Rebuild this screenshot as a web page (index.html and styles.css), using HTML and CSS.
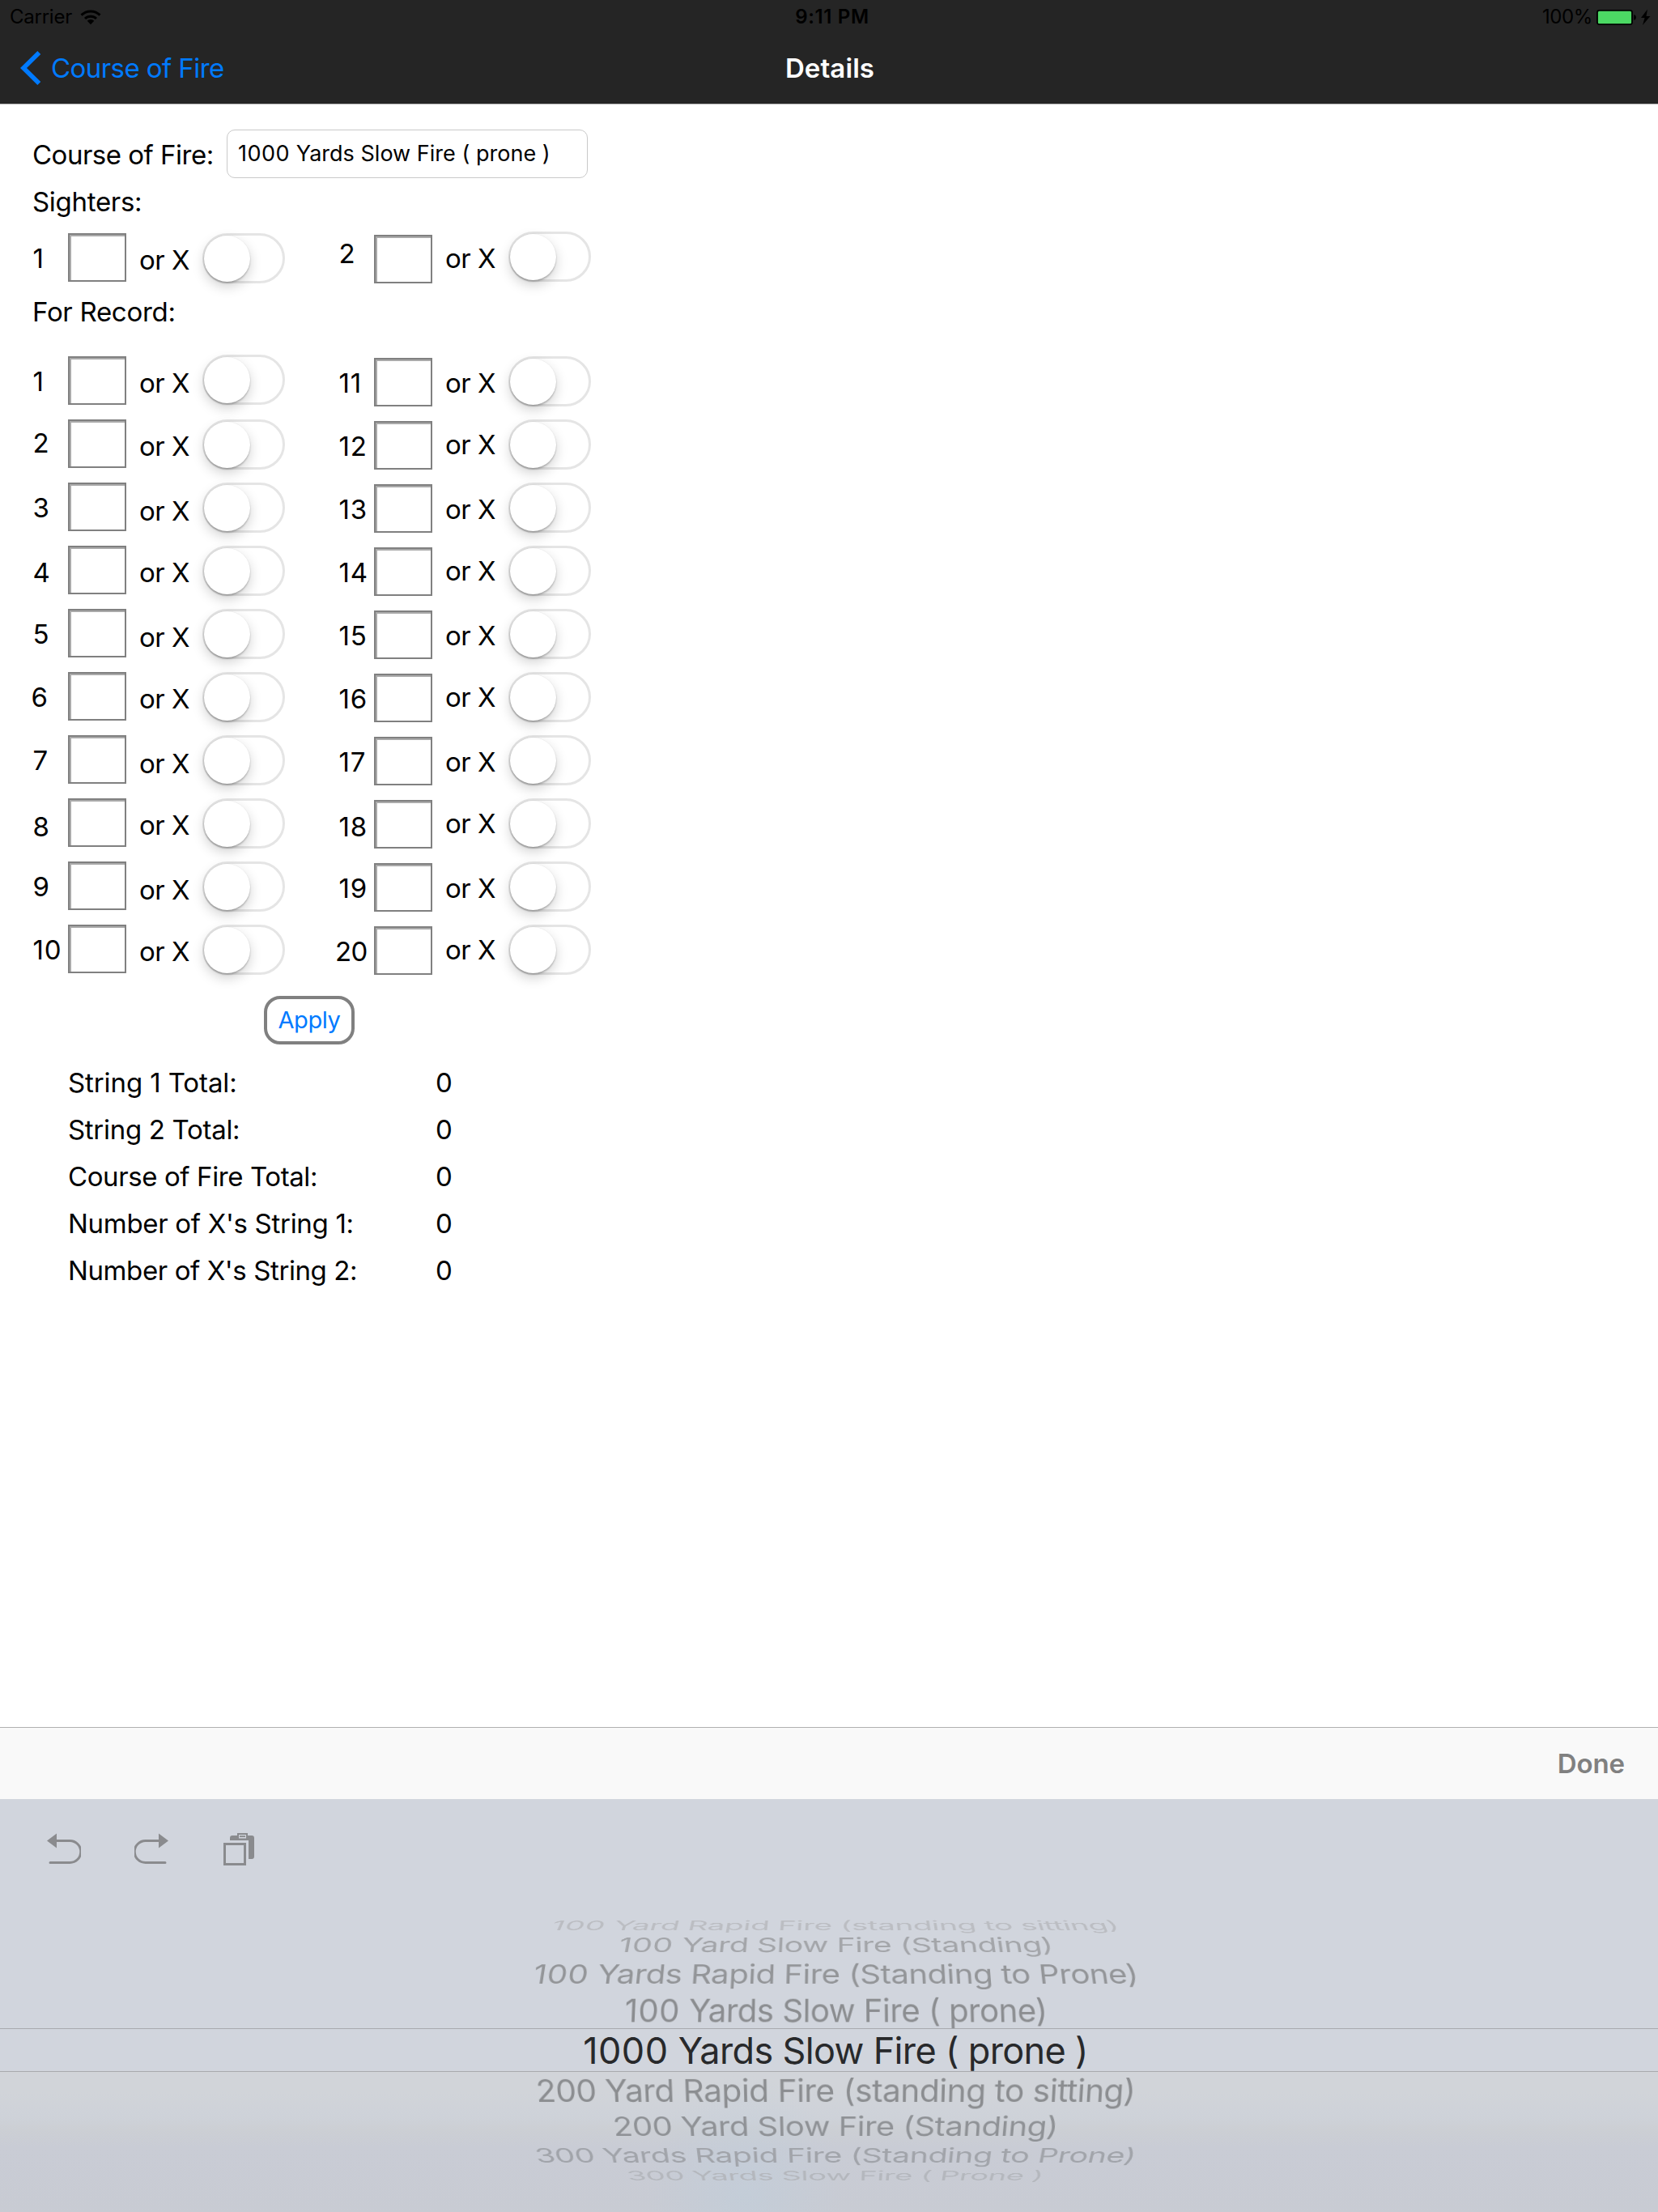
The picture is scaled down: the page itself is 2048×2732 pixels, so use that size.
FILE: index.html
```
<!DOCTYPE html>
<html lang="en">
<head>
<meta charset="utf-8">
<title>Details</title>
<link rel="stylesheet" href="styles.css">
</head>
<body>
<header class="top">
  <div class="status">
    <div class="status-left"><span class="carrier">Carrier</span>
      <svg class="wifi" width="26" height="20" viewBox="0 0 26 20"><g fill="none" stroke="#000" stroke-width="3"><path d="M1.5 7.6a16.4 16.4 0 0 1 23 0"/><path d="M6 12a10 10 0 0 1 14 0"/></g><path d="M13 19.3l-4.3-4.5a6.2 6.2 0 0 1 8.6 0z"/></svg>
    </div>
    <div class="clock">9:11 PM</div>
    <div class="status-right"><span class="percent">100%</span>
      <svg width="68" height="20" viewBox="0 0 68 20"><rect x="1" y="1.8" width="43" height="17.4" rx="2.5" fill="#4cd964" stroke="#000" stroke-width="1.8"/><path d="M46.200 7.300c3.600 0 3.600 6.500 0 6.500z"/><path d="M63 .5L55 11h4.600L57 20l9.500-11h-5z"/></svg>
    </div>
  </div>
  <nav class="nav">
    <a class="back"><svg width="26" height="42" viewBox="0 0 26 42"><path d="M23.300 2L4 21l19.300 19" fill="none" stroke="#007aff" stroke-width="5.600"/></svg><span>Course of Fire</span></a>
    <h1 class="title">Details</h1>
  </nav>
</header>

<main class="form">
  <div class="course"><label class="course-label">Course of Fire:</label><div class="course-field"><span class="digits">1000</span> Yards Slow Fire ( prone )</div></div>
  <h2 class="heading sighters-heading">Sighters:</h2>
  <div class="shots sighters">
    <div class="shot"><span class="num">1</span><i class="score"></i><span class="or">or X</span><i class="switch"></i></div>
    <div class="shot right"><span class="num raise">2</span><i class="score low"></i><span class="or high">or X</span><i class="switch"></i></div>
  </div>
  <h2 class="heading record-heading">For Record:</h2>
  <div class="shots record">
    <div class="shot"><span class="num">1</span><i class="score"></i><span class="or">or X</span><i class="switch"></i></div>
    <div class="shot right"><span class="num">11</span><i class="score"></i><span class="or">or X</span><i class="switch"></i></div>
    <div class="shot"><span class="num high">2</span><i class="score"></i><span class="or">or X</span><i class="switch"></i></div>
    <div class="shot right"><span class="num">12</span><i class="score"></i><span class="or high">or X</span><i class="switch"></i></div>
    <div class="shot"><span class="num">3</span><i class="score"></i><span class="or low">or X</span><i class="switch"></i></div>
    <div class="shot right"><span class="num">13</span><i class="score"></i><span class="or">or X</span><i class="switch"></i></div>
    <div class="shot"><span class="num low">4</span><i class="score"></i><span class="or">or X</span><i class="switch"></i></div>
    <div class="shot right"><span class="num">14</span><i class="score"></i><span class="or high">or X</span><i class="switch"></i></div>
    <div class="shot"><span class="num">5</span><i class="score"></i><span class="or low">or X</span><i class="switch"></i></div>
    <div class="shot right"><span class="num">15</span><i class="score"></i><span class="or">or X</span><i class="switch"></i></div>
    <div class="shot"><span class="num six">6</span><i class="score"></i><span class="or">or X</span><i class="switch"></i></div>
    <div class="shot right"><span class="num">16</span><i class="score"></i><span class="or high">or X</span><i class="switch"></i></div>
    <div class="shot"><span class="num">7</span><i class="score"></i><span class="or low">or X</span><i class="switch"></i></div>
    <div class="shot right"><span class="num">17</span><i class="score"></i><span class="or">or X</span><i class="switch"></i></div>
    <div class="shot"><span class="num lower">8</span><i class="score"></i><span class="or">or X</span><i class="switch"></i></div>
    <div class="shot right"><span class="num low">18</span><i class="score"></i><span class="or high">or X</span><i class="switch"></i></div>
    <div class="shot"><span class="num">9</span><i class="score"></i><span class="or low">or X</span><i class="switch"></i></div>
    <div class="shot right"><span class="num">19</span><i class="score"></i><span class="or">or X</span><i class="switch"></i></div>
    <div class="shot"><span class="num">10</span><i class="score"></i><span class="or">or X</span><i class="switch"></i></div>
    <div class="shot right"><span class="num twenty">20</span><i class="score"></i><span class="or high">or X</span><i class="switch"></i></div>
  </div>
  <button class="apply">Apply</button>
  <dl class="totals">
    <dt class="loose">String 1 Total:</dt><dd>0</dd>
    <dt>String 2 Total:</dt><dd>0</dd>
    <dt class="tight">Course of Fire Total:</dt><dd>0</dd>
    <dt>Number of X's String 1:</dt><dd>0</dd>
    <dt class="tight">Number of X's String 2:</dt><dd>0</dd>
  </dl>
</main>

<div class="accessory"><span>Done</span></div>
<section class="keyboard">
  <div class="tools">
    <svg width="42" height="40" viewBox="0 0 42 40"><path d="M10 9.500h18.300a13.500 13.500 0 0 1 0 27H4" fill="none" stroke="#8a8b8e" stroke-width="3" stroke-linecap="round"/><path d="M0 9.500L12 .5v18z" fill="#8a8b8e"/></svg>
    <svg width="42" height="40" viewBox="0 0 42 40"><path d="M32 9.500H13.700a13.500 13.500 0 0 0 0 27H38" fill="none" stroke="#8a8b8e" stroke-width="3" stroke-linecap="round"/><path d="M42 9.500L30 .5v18z" fill="#8a8b8e"/></svg>
    <svg class="paste" width="38" height="40" viewBox="0 0 38 40"><path d="M8 9V6q0-3 3-3h24q3 0 3 3v23q0 3-3 3h-4V9z" fill="#8a8b8e"/><path d="M17 0h13v8H17z" fill="#8a8b8e"/><path d="M19 2h9v4.500h-9z" fill="#d1d5dd"/><path d="M20 3.200h7v1.800h-7z" fill="#8a8b8e"/><path d="M1.500 13.500h25v25h-25z" fill="none" stroke="#8a8b8e" stroke-width="3"/></svg>
  </div>
  <ul class="picker">
    <li class="row up4"><span class="digits">100</span> Yard Rapid Fire (standing to sitting)</li>
    <li class="row up3"><span class="digits">100</span> Yard Slow Fire (Standing)</li>
    <li class="row up2"><span class="digits">100</span> Yards Rapid Fire (Standing to Prone)</li>
    <li class="row up1"><span class="digits">100</span> Yards Slow Fire ( prone)</li>
    <li class="row selected"><span class="digits">1000</span> Yards Slow Fire ( prone )</li>
    <li class="row down1">200 Yard Rapid Fire (standing to sitting)</li>
    <li class="row down2">200 Yard Slow Fire (Standing)</li>
    <li class="row down3">300 Yards Rapid Fire (Standing to Prone)</li>
    <li class="row down4">300 Yards Slow Fire ( Prone )</li>
  </ul>
</section>
</body>
</html>
```
FILE: styles.css
```
* { box-sizing: border-box; margin: 0; padding: 0; }

body {
  width: 2048px;
  height: 2732px;
  display: flex;
  flex-direction: column;
  overflow: hidden;
  background: #fff;
  color: #000;
  font: 400 33px/40px Inter, "Liberation Sans", sans-serif;
  white-space: nowrap;
}

/* Status bar and navigation */
.top { height: 129px; background: #252525; border-bottom: 1px solid #b2b2b2; }
.status {
  height: 40px;
  display: grid;
  grid-template-columns: 1fr auto 1fr;
  align-items: center;
  padding: 1px 8px 0 12px;
  font-size: 24px;
}
.status-left, .status-right { display: flex; align-items: center; }
.carrier { letter-spacing: -0.25px; }
.wifi { margin-left: 10px; }
.clock { font-weight: 600; letter-spacing: 0.65px; padding-left: 4px; }
.status-right { justify-content: flex-end; }
.percent { letter-spacing: -0.4px; margin-right: 5px; }
.nav {
  height: 88px;
  display: grid;
  grid-template-columns: 1fr auto 1fr;
  align-items: center;
  padding: 0 23px 0 25px;
}
.back { display: flex; align-items: center; gap: 12px; color: #007aff; letter-spacing: -0.57px; }
.title { font-size: 33px; font-weight: 600; letter-spacing: 0.1px; color: #fff; }

/* Score entry */
.form { flex: 1; padding: 31px 0 0 40px; }
.course { display: flex; height: 60px; }
.course-label { width: 240px; padding-top: 11px; letter-spacing: -0.5px; }
.course-field {
  width: 446px;
  height: 60px;
  border: 1px solid #c9c9c9;
  border-radius: 10px;
  padding-left: 13px;
  font-size: 27px;
  line-height: 58px;
  letter-spacing: 0.02px;
}
.digits { letter-spacing: 0.5px; }
.heading { font-size: 33px; font-weight: 400; letter-spacing: -0.3px; }
.sighters-heading { margin-top: 9px; }
.record-heading { margin-top: 1px; }
.shots { display: grid; grid-template-columns: 378px 378px; grid-auto-rows: 78px; }
.sighters { margin-top: 17px; }
.record { margin-top: 33px; }
.shot { display: flex; align-items: flex-start; }
.num { width: 44px; margin-top: 13px; text-indent: 0.5px; letter-spacing: 0.8px; }
.right .num { margin-top: 15px; }
.num.high { margin-top: 11px; }
.num.low { margin-top: 15px; }
.num.lower { margin-top: 17px; }
.right .num.low { margin-top: 17px; }
.right .num.raise { margin-top: 7px; }
.num.six { text-indent: -1.5px; }
.num.twenty { text-indent: -4px; letter-spacing: -0.7px; }
.score {
  width: 72px;
  height: 60px;
  margin-top: 2px;
  border: 2px solid #808080;
  box-shadow: inset 2px 2px 0 #aaa;
}
.right .score { margin-top: 4px; }
.or { width: 94px; padding-left: 16px; margin-top: 15px; letter-spacing: -0.5px; }
.or.high { margin-top: 13px; }
.or.low { margin-top: 17px; }
.switch {
  width: 102px;
  height: 62px;
  margin-top: 2px;
  border: 3px solid #e5e5e5;
  border-radius: 31px;
}
.record .shot:first-child .switch, .sighters .right .switch { margin-top: 0; }
.switch::before {
  content: "";
  display: block;
  width: 57px;
  height: 57px;
  margin: -0.5px 0 0 -1px;
  border-radius: 50%;
  background: #fff;
  box-shadow: 0 0 0 0.5px rgba(0, 0, 0, 0.05), 0 2px 2px rgba(0, 0, 0, 0.2), 0 6px 15px rgba(0, 0, 0, 0.18);
}
.sighters .shot:first-child .switch { margin-top: 2px; }
.apply {
  display: block;
  width: 112px;
  height: 60px;
  margin: 12px 0 0 286px;
  border: 4px solid #808080;
  border-radius: 20px;
  background: #fff;
  color: #007aff;
  font: 400 29px/50px Inter, "Liberation Sans", sans-serif;
  letter-spacing: -0.4px;
}
.totals {
  display: grid;
  grid-template-columns: 454px auto;
  grid-auto-rows: 58px;
  justify-content: start;
  padding-left: 44px;
  margin-top: 18px;
  line-height: 58px;
}
.totals dt { letter-spacing: -0.3px; }
.totals .loose { letter-spacing: -0.1px; }
.totals .tight { letter-spacing: -0.4px; }

/* Input accessory and picker */
.accessory {
  height: 89px;
  background: #f9f9f9;
  border-top: 1px solid #b0b0b0;
  display: flex;
  align-items: center;
  justify-content: flex-end;
  padding-right: 41px;
  color: #808080;
  font-weight: 600;
  letter-spacing: -0.1px;
}
.keyboard {
  height: 510px;
  padding-top: 42px;
  background:
    linear-gradient(#a8aaae, #a8aaae) 0 283px / 100% 1px no-repeat,
    linear-gradient(#a8aaae, #a8aaae) 0 336px / 100% 1px no-repeat,
    radial-gradient(ellipse 120px 150px at 920px 490px, rgba(190, 207, 221, 0.45), rgba(190, 207, 221, 0)) no-repeat,
    linear-gradient(#d1d5dd 336px, #d1d4d9 337px, #d1d4d9 362px, #ced2d9 392px, #cccfd4 408px, #c9ccd5 430px, #c8cbd3 510px);
}
.tools { display: flex; height: 40px; padding-left: 58px; gap: 66px; }
.paste { margin-left: 2px; }
.picker {
  list-style: none;
  display: flex;
  flex-direction: column;
  align-items: center;
  padding: 74px 0 0 16px;
}
.row {
  height: 0;
  line-height: 0;
  font-size: 41px;
  letter-spacing: -0.5px;
  color: #8b8d90;
}
.up4 { color: #bbbdc2; transform: perspective(1800px) scaleX(0.943) rotateX(67deg); }
.up3 { margin-top: 24px; color: #a3a5a9; transform: perspective(1800px) scaleX(0.958) rotateX(53deg); }
.up2 { margin-top: 36px; color: #939598; transform: perspective(1800px) scaleX(0.976) rotateX(38deg); }
.up1 { margin-top: 45px; transform: perspective(1800px) scaleX(0.979) rotateX(17deg); }
.selected { margin-top: 50px; font-size: 45px; letter-spacing: -0.65px; color: #28292b; }
.down1 { margin-top: 49px; transform: perspective(1800px) scaleX(0.992) rotateX(-20deg); }
.down2 { margin-top: 44px; color: #8f9296; transform: perspective(1800px) scaleX(0.975) rotateX(-37deg); }
.down3 { margin-top: 36px; color: #a1a4aa; transform: perspective(1800px) scaleX(0.963) rotateX(-53deg); }
.down4 { margin-top: 25px; color: #b4b7bd; transform: perspective(1800px) scaleX(0.933) rotateX(-67deg); }
```
